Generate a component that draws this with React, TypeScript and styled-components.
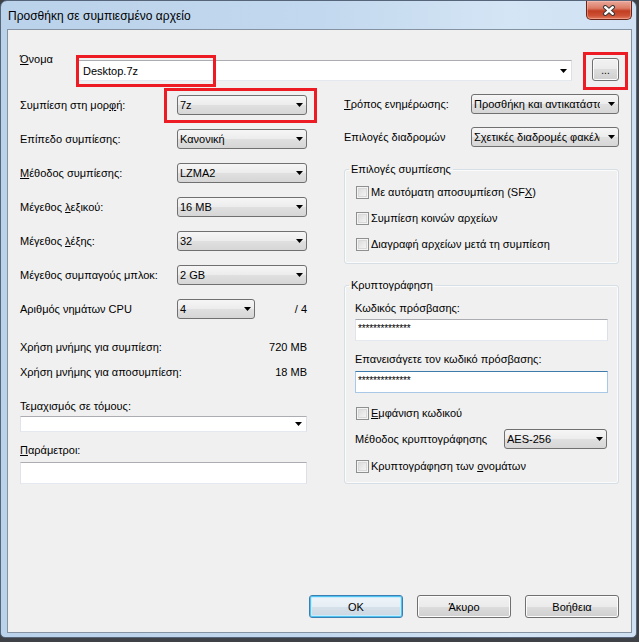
import React from 'react';
import styled, { createGlobalStyle } from 'styled-components';

const GlobalStyle = createGlobalStyle`
  html, body {
    margin: 0;
    padding: 0;
    background: #3e4246;
  }
  body {
    font-family: "Liberation Sans", Arial, sans-serif;
    font-size: 11px;
    color: #000;
  }
`;

const Window = styled.div`
  width: 637px;
  height: 638px;
  box-sizing: border-box;
  display: flex;
  flex-direction: column;
  padding: 0 4px 4px 6px;
  border: 1px solid #56657a;
  border-radius: 7px 7px 5px 5px;
  background: linear-gradient(to right, #bad2ea 0%, #c2d8ee 50%, #d4e5f5 80%, #cfe1f3 100%);
`;

const TitleBar = styled.div`
  height: 28px;
  display: flex;
  justify-content: space-between;
  align-items: flex-start;
  padding-left: 1px;
`;

const Title = styled.span`
  margin-top: 8px;
  font-size: 12px;
  line-height: 14px;
`;

const CloseButton = styled.div`
  width: 46px;
  height: 19px;
  box-sizing: border-box;
  display: flex;
  align-items: center;
  justify-content: center;
  border: 1px solid #6a2418;
  border-top: none;
  border-radius: 0 0 5px 5px;
  background: linear-gradient(#e9a99b 0%, #dc7c66 40%, #c13e23 55%, #cd4f33 80%, #e07a5c 100%);
  box-shadow: inset 0 0 0 1px rgba(255, 200, 190, 0.45);
`;

const Client = styled.div`
  flex: 1;
  display: flex;
  flex-direction: column;
  padding: 22px 12px 14px 12px;
  border: 1px solid #8592a2;
  background: #f0f0f0;
`;

const Key = styled.span`
  text-decoration: underline;
  text-underline-offset: 1px;
`;

const NameRow = styled.div`
  display: flex;
  align-items: flex-start;
`;

const NameLabel = styled.span`
  width: 57px;
  line-height: 14px;
`;

const EditCombo = styled.div<{ $mt?: number }>`
  position: relative;
  flex: 1;
  height: 21px;
  box-sizing: border-box;
  display: flex;
  align-items: center;
  margin-top: ${p => p.$mt ?? 0}px;
  padding: 0 4px 0 5px;
  border: 1px solid;
  border-color: #abadb3 #dbdfe6 #e3e9ef #e2e3ea;
  background: #fff;
`;

const DropList = styled.div<{ $width?: number }>`
  position: relative;
  width: ${p => (p.$width ? `${p.$width}px` : 'auto')};
  height: 20px;
  box-sizing: border-box;
  display: flex;
  align-items: center;
  padding: 0 3px 0 2px;
  border: 1px solid #707070;
  border-radius: 3px;
  background: linear-gradient(#f6f6f6 0%, #ececec 50%, #e0e0e0 50%, #d6d6d6 100%);
`;

const Value = styled.span`
  flex: 1;
  min-width: 0;
  margin-right: 8px;
  overflow: hidden;
  white-space: nowrap;
  line-height: 14px;
`;

const Arrow = () => (
  <svg width="7" height="4" viewBox="0 0 7 4">
    <path d="M0 0H7L3.5 4Z" fill="#000" />
  </svg>
);

const Highlight = styled.div<{ $top: number; $left: number; $w: number; $h: number }>`
  position: absolute;
  top: ${p => p.$top}px;
  left: ${p => p.$left}px;
  width: ${p => p.$w}px;
  height: ${p => p.$h}px;
  box-sizing: border-box;
  border: 3px solid #ed1c24;
  pointer-events: none;
`;

const BrowseButton = styled.div`
  position: relative;
  width: 27px;
  height: 23px;
  box-sizing: border-box;
  margin: 6px 0 0 20px;
  display: flex;
  align-items: flex-end;
  justify-content: center;
  padding-bottom: 5px;
  border: 1px solid #707070;
  border-radius: 3px;
  background: linear-gradient(#f2f2f2 0%, #ebebeb 50%, #dddddd 50%, #cfcfcf 100%);
  box-shadow: inset 0 0 0 1px #fcfcfc;
  font-size: 10px;
  line-height: 8px;
`;

const Columns = styled.div`
  display: grid;
  grid-template-columns: 287px 275px;
  column-gap: 37px;
  margin-top: 13px;
`;

const Column = styled.div<{ $pt?: number }>`
  display: flex;
  flex-direction: column;
  padding-top: ${p => p.$pt ?? 0}px;
`;

const FieldRow = styled.div<{ $cols: string; $mt?: number }>`
  display: grid;
  grid-template-columns: ${p => p.$cols};
  align-items: center;
  height: 20px;
  margin-top: ${p => p.$mt ?? 0}px;
`;

const Label = styled.div<{ $mt?: number }>`
  line-height: 14px;
  white-space: nowrap;
  margin-top: ${p => p.$mt ?? 0}px;
`;

const Trail = styled.span`
  text-align: right;
`;

const InfoRow = styled.div<{ $mt?: number }>`
  display: flex;
  justify-content: space-between;
  line-height: 14px;
  margin-top: ${p => p.$mt ?? 0}px;
`;

const TextBox = styled.div<{ $mt?: number; $focused?: boolean }>`
  height: 22px;
  box-sizing: border-box;
  display: flex;
  align-items: center;
  padding: 0 2px;
  margin-top: ${p => p.$mt ?? 0}px;
  border: 1px solid;
  border-color: ${p =>
    p.$focused ? '#3d7bad #a9c8e8 #a9c8e8 #a9c8e8' : '#abadb3 #dbdfe6 #e3e9ef #e2e3ea'};
  background: #fff;
`;

const Secret = styled.span`
  font-size: 10px;
  letter-spacing: -0.15px;
  line-height: 12px;
  margin-top: -2px;
`;

const Group = styled.fieldset<{ $mt?: number }>`
  margin: ${p => p.$mt ?? 0}px 0 0 0;
  padding: 0;
  min-width: 0;
  border: 1px solid #d5dfe5;
  border-radius: 3px;
  box-shadow: inset 0 0 0 1px #fbfbfb;
`;

const GroupTitle = styled.legend`
  margin-left: 4px;
  padding: 0 2px;
  line-height: 14px;
`;

const GroupBody = styled.div<{ $pb: number }>`
  display: flex;
  flex-direction: column;
  padding: 9px 10px ${p => p.$pb}px 10px;
`;

const CheckRow = styled.label<{ $mt?: number }>`
  display: flex;
  align-items: center;
  gap: 2px;
  padding-left: 1px;
  line-height: 14px;
  margin-top: ${p => p.$mt ?? 0}px;
`;

const CheckBox = styled.span`
  width: 13px;
  height: 13px;
  box-sizing: border-box;
  border: 1px solid #8e8f8f;
  background: linear-gradient(135deg, #d6d6d6 0%, #ececec 60%, #f8f8f8 100%);
  box-shadow: inset 0 0 0 1px #f4f4f4, inset 0 0 0 2px #d9d9d9;
`;

const Footer = styled.div`
  margin-top: auto;
  display: flex;
  justify-content: flex-end;
  gap: 14px;
`;

const DialogButton = styled.div<{ $default?: boolean }>`
  width: 94px;
  height: 23px;
  box-sizing: border-box;
  display: flex;
  align-items: center;
  justify-content: center;
  border: 1px solid ${p => (p.$default ? '#3c7fb1' : '#707070')};
  border-radius: 3px;
  background: ${p =>
    p.$default
      ? 'linear-gradient(#eef4f9 0%, #e6eef5 50%, #d6e1ea 50%, #cbd7e1 100%)'
      : 'linear-gradient(#f2f2f2 0%, #ebebeb 50%, #dddddd 50%, #cfcfcf 100%)'};
  box-shadow: ${p =>
    p.$default ? 'inset 0 0 0 1px #4fc3f2, inset 0 0 0 2px #c7ecfb' : 'inset 0 0 0 1px #fcfcfc'};
`;

const leftCols = '157px 130px';
const rightCols = '127px 148px';

const Select: React.FC<{ value: string; width?: number; children?: React.ReactNode }> = ({
  value,
  width,
  children,
}) => (
  <DropList $width={width}>
    <Value>{value}</Value>
    <Arrow />
    {children}
  </DropList>
);

const Check: React.FC<{ mt?: number; children: React.ReactNode }> = ({ mt, children }) => (
  <CheckRow $mt={mt}>
    <CheckBox />
    <span>{children}</span>
  </CheckRow>
);

const App: React.FC = () => {
  return (
    <>
      <GlobalStyle />
      <Window>
        <TitleBar>
          <Title>Προσθήκη σε συμπιεσμένο αρχείο</Title>
          <CloseButton>
            <svg width="14" height="11" viewBox="0 0 14 11">
              <path d="M3.2 2.2L10.8 8.8M10.8 2.2L3.2 8.8" stroke="#3a3a3a" strokeWidth="4.4" strokeLinecap="round" />
              <path d="M3.2 2.2L10.8 8.8M10.8 2.2L3.2 8.8" stroke="#fff" strokeWidth="2.4" strokeLinecap="round" />
            </svg>
          </CloseButton>
        </TitleBar>

        <Client>
          <NameRow>
            <NameLabel>
              <Key>Ό</Key>νομα
            </NameLabel>
            <EditCombo $mt={8}>
              <Value>Desktop.7z</Value>
              <Arrow />
              <Highlight $top={-6} $left={-2} $w={140} $h={32} />
            </EditCombo>
            <BrowseButton>
              ...
              <Highlight $top={-7} $left={-10} $w={45} $h={38} />
            </BrowseButton>
          </NameRow>

          <Columns>
            <Column $pt={1}>
              <FieldRow $cols={leftCols}>
                <Label>
                  Συμπίεση στη μορ<Key>φ</Key>ή:
                </Label>
                <Select value="7z">
                  <Highlight $top={-8} $left={-14} $w={153} $h={35} />
                </Select>
              </FieldRow>
              <FieldRow $cols={leftCols} $mt={14}>
                <Label>Επίπεδο συμπίεσης:</Label>
                <Select value="Κανονική" />
              </FieldRow>
              <FieldRow $cols={leftCols} $mt={14}>
                <Label>
                  <Key>Μ</Key>έθοδος συμπίεσης:
                </Label>
                <Select value="LZMA2" />
              </FieldRow>
              <FieldRow $cols={leftCols} $mt={14}>
                <Label>
                  Μέγεθος <Key>λ</Key>εξικού:
                </Label>
                <Select value="16 MB" />
              </FieldRow>
              <FieldRow $cols={leftCols} $mt={14}>
                <Label>
                  Μέγεθος <Key>λ</Key>έξης:
                </Label>
                <Select value="32" />
              </FieldRow>
              <FieldRow $cols={leftCols} $mt={14}>
                <Label>Μέγεθος συμπαγούς μπλοκ:</Label>
                <Select value="2 GB" />
              </FieldRow>
              <FieldRow $cols="157px 78px 1fr" $mt={14}>
                <Label>Αριθμός νημάτων CPU</Label>
                <Select value="4" />
                <Trail>/ 4</Trail>
              </FieldRow>

              <InfoRow $mt={21}>
                <span>Χρήση μνήμης για συμπίεση:</span>
                <span>720 MB</span>
              </InfoRow>
              <InfoRow $mt={11}>
                <span>Χρήση μνήμης για αποσυμπίεση:</span>
                <span>18 MB</span>
              </InfoRow>

              <Label $mt={20}>Τεμαχισμός σε τόμους:</Label>
              <EditCombo $mt={3}>
                <Value />
                <Arrow />
              </EditCombo>
              <Label $mt={11}>
                <Key>Π</Key>αράμετροι:
              </Label>
              <TextBox $mt={5} />
            </Column>

            <Column>
              <FieldRow $cols={rightCols}>
                <Label>
                  <Key>Τ</Key>ρόπος ενημέρωσης:
                </Label>
                <Select value="Προσθήκη και αντικατάσταση αρχείων" />
              </FieldRow>
              <FieldRow $cols={rightCols} $mt={13}>
                <Label>Επιλογές διαδρομών</Label>
                <Select value="Σχετικές διαδρομές φακέλων" />
              </FieldRow>

              <Group $mt={15}>
                <GroupTitle>Επιλογές συμπίεσης</GroupTitle>
                <GroupBody $pb={12}>
                  <Check>
                    Με αυτόματη αποσυμπίεση (SF<Key>X</Key>)
                  </Check>
                  <Check mt={12}>Συμπίεση κοινών αρχείων</Check>
                  <Check mt={12}>Διαγραφή αρχείων μετά τη συμπίεση</Check>
                </GroupBody>
              </Group>

              <Group $mt={14}>
                <GroupTitle>Κρυπτογράφηση</GroupTitle>
                <GroupBody $pb={10}>
                  <Label>Κωδικός πρόσβασης:</Label>
                  <TextBox $mt={4}>
                    <Secret>**************</Secret>
                  </TextBox>
                  <Label $mt={11}>Επανεισάγετε τον κωδικό πρόσβασης:</Label>
                  <TextBox $mt={5} $focused>
                    <Secret>**************</Secret>
                  </TextBox>
                  <Check mt={13}>
                    <Key>Ε</Key>μφάνιση κωδικού
                  </Check>
                  <FieldRow $cols="149px 103px" $mt={9}>
                    <Label>Μέθοδος κρυπτογράφησης</Label>
                    <Select value="AES-256" />
                  </FieldRow>
                  <Check mt={10}>
                    Κρυπτογράφηση των <Key>ο</Key>νομάτων
                  </Check>
                </GroupBody>
              </Group>
            </Column>
          </Columns>

          <Footer>
            <DialogButton $default>OK</DialogButton>
            <DialogButton>Άκυρο</DialogButton>
            <DialogButton>Βοήθεια</DialogButton>
          </Footer>
        </Client>
      </Window>
    </>
  );
};

export default App;
